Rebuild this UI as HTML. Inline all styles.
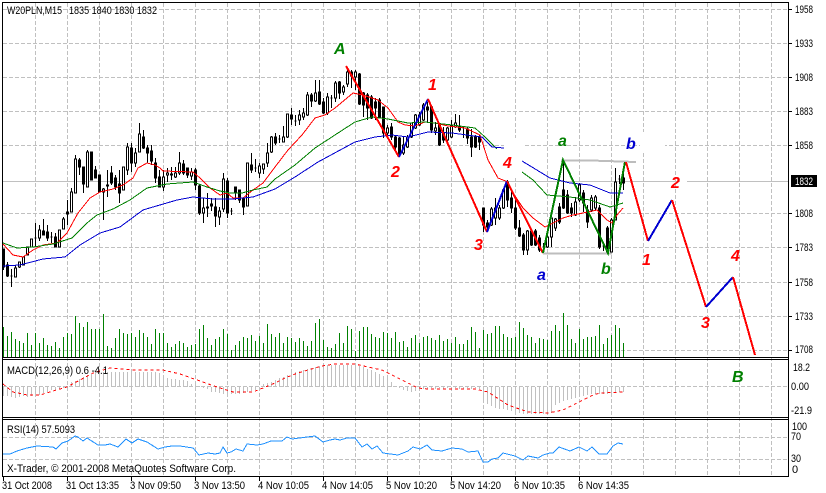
<!DOCTYPE html>
<html><head><meta charset="utf-8"><style>
html,body{margin:0;padding:0;background:#fff;width:826px;height:493px;overflow:hidden}
svg{display:block}
text{font-family:"Liberation Sans",sans-serif;font-size:11px;fill:#000}
.w{font-weight:bold;font-style:italic;font-size:16px}
</style></head><body>
<svg width="826" height="493" viewBox="0 0 826 493" xmlns="http://www.w3.org/2000/svg">
<rect width="826" height="493" fill="#fff"/>
<g shape-rendering="crispEdges" fill="none" stroke-width="1">
<path stroke="#c0c0c0" stroke-dasharray="4 2" d="M35.5 3V476M67.5 3V476M99.5 3V476M131.5 3V476M163.5 3V476M195.5 3V476M227.5 3V476M259.5 3V476M291.5 3V476M323.5 3V476M355.5 3V476M387.5 3V476M419.5 3V476M451.5 3V476M483.5 3V476M515.5 3V476M547.5 3V476M579.5 3V476M611.5 3V476M643.5 3V476M675.5 3V476M707.5 3V476M739.5 3V476M771.5 3V476"/>
<path stroke="#c0c0c0" stroke-dasharray="4 2" d="M3 9.5H788M3 43.5H788M3 77.5H788M3 111.5H788M3 145.5H788M3 213.5H788M3 247.5H788M3 282.5H788M3 316.5H788M3 350.5H788M3 386.5H788M3 437.5H788M3 459.5H788"/>
<rect x="640" y="132" width="25" height="20" fill="#fff" stroke="none"/>
<rect x="504" y="138" width="19" height="40" fill="#fff" stroke="none"/>
<rect x="481" y="148" width="22" height="30" fill="#fff" stroke="none"/>
<path stroke="#c0c0c0" d="M3 181.5H390M430 181.5H680M687 181.5H788"/>

<!-- volume -->
<path stroke="#008000" d="M3.5 357V327M7.5 357V336M11.5 357V332M15.5 357V339M19.5 357V341M23.5 357V343M27.5 357V333M31.5 357V345M35.5 357V333M39.5 357V343M43.5 357V338M47.5 357V345M51.5 357V346M55.5 357V342M59.5 357V348M63.5 357V337M67.5 357V333M71.5 357V334M75.5 357V316M79.5 357V323M83.5 357V327M87.5 357V322M91.5 357V329M95.5 357V329M99.5 357V329M103.5 357V314M107.5 357V346M111.5 357V348M115.5 357V338M119.5 357V329M123.5 357V333M127.5 357V334M131.5 357V333M135.5 357V337M139.5 357V330M143.5 357V333M147.5 357V337M151.5 357V344M155.5 357V329M159.5 357V333M163.5 357V333M167.5 357V343M171.5 357V347M175.5 357V344M179.5 357V341M183.5 357V343M187.5 357V347M191.5 357V345M195.5 357V344M199.5 357V329M203.5 357V325M207.5 357V338M211.5 357V345M215.5 357V339M219.5 357V337M223.5 357V329M227.5 357V334M231.5 357V350M235.5 357V345M239.5 357V341M243.5 357V337M247.5 357V338M251.5 357V335M255.5 357V341M259.5 357V336M263.5 357V343M267.5 357V324M271.5 357V334M275.5 357V337M279.5 357V333M283.5 357V343M287.5 357V337M291.5 357V338M295.5 357V342M299.5 357V338M303.5 357V341M307.5 357V346M311.5 357V341M315.5 357V323M319.5 357V319M323.5 357V340M327.5 357V347M331.5 357V348M335.5 357V344M339.5 357V333M343.5 357V343M347.5 357V326M351.5 357V329M355.5 357V351M359.5 357V331M363.5 357V327M367.5 357V327M371.5 357V334M375.5 357V337M379.5 357V338M383.5 357V332M387.5 357V333M391.5 357V338M395.5 357V332M399.5 357V342M403.5 357V341M407.5 357V347M411.5 357V338M415.5 357V335M419.5 357V343M423.5 357V337M427.5 357V336M431.5 357V338M435.5 357V340M439.5 357V335M443.5 357V341M447.5 357V339M451.5 357V343M455.5 357V337M459.5 357V344M463.5 357V344M467.5 357V340M471.5 357V327M475.5 357V332M479.5 357V348M483.5 357V330M487.5 357V334M491.5 357V333M495.5 357V326M499.5 357V326M503.5 357V334M507.5 357V337M511.5 357V338M515.5 357V337M519.5 357V322M523.5 357V328M527.5 357V335M531.5 357V337M535.5 357V343M539.5 357V338M543.5 357V339M547.5 357V340M551.5 357V331M555.5 357V325M559.5 357V331M563.5 357V313M567.5 357V325M571.5 357V339M575.5 357V343M579.5 357V329M583.5 357V339M587.5 357V337M591.5 357V337M595.5 357V336M599.5 357V325M603.5 357V344M607.5 357V338M611.5 357V335M615.5 357V325M619.5 357V328M623.5 357V343"/>

<!-- MACD histogram -->
<path stroke="#c0c0c0" d="M3.5 387V396M7.5 387V396M11.5 387V397M15.5 387V398M19.5 387V397M23.5 387V396M27.5 387V397M31.5 387V396M35.5 387V396M39.5 387V395M43.5 387V393M47.5 387V392M51.5 387V390M55.5 387V390M59.5 387V389M63.5 387V388M67.5 387V386M71.5 387V382M75.5 387V381M79.5 387V379M83.5 387V377M87.5 387V376M91.5 387V374M95.5 387V373M99.5 387V373M103.5 387V372M107.5 387V372M111.5 387V372M115.5 387V372M119.5 387V372M123.5 387V372M127.5 387V372M131.5 387V372M135.5 387V372M139.5 387V372M143.5 387V372M147.5 387V372M151.5 387V372M155.5 387V372M159.5 387V373M163.5 387V376M167.5 387V378M171.5 387V379M175.5 387V379M179.5 387V380M183.5 387V380M187.5 387V381M191.5 387V384M195.5 387V385M199.5 387V386M203.5 387V388M207.5 387V389M211.5 387V392M215.5 387V392M219.5 387V393M223.5 387V394M227.5 387V393M231.5 387V394M235.5 387V394M239.5 387V394M243.5 387V393M247.5 387V392M251.5 387V391M255.5 387V390M259.5 387V388M263.5 387V384M267.5 387V383M271.5 387V382M275.5 387V380M279.5 387V378M283.5 387V377M287.5 387V375M291.5 387V373M295.5 387V372M299.5 387V371M303.5 387V370M307.5 387V369M311.5 387V368M315.5 387V367M319.5 387V366M323.5 387V366M327.5 387V365M331.5 387V365M335.5 387V365M339.5 387V365M343.5 387V365M347.5 387V365M351.5 387V365M355.5 387V365M359.5 387V366M363.5 387V367M367.5 387V369M371.5 387V370M375.5 387V372M379.5 387V374M383.5 387V376M387.5 387V379M391.5 387V382M395.5 387V386M399.5 387V388M403.5 387V390M407.5 387V391M411.5 387V392M415.5 387V391M419.5 387V390M423.5 387V389M427.5 387V389M431.5 387V388M435.5 387V389M439.5 387V388M443.5 387V389M447.5 387V388M451.5 387V389M455.5 387V388M459.5 387V389M463.5 387V389M467.5 387V388M471.5 387V389M475.5 387V388M479.5 387V389M483.5 387V402M487.5 387V404M491.5 387V406M495.5 387V408M499.5 387V409M503.5 387V409M507.5 387V410M511.5 387V411M515.5 387V412M519.5 387V413M523.5 387V414M527.5 387V414M531.5 387V414M535.5 387V414M539.5 387V414M543.5 387V414M547.5 387V414M551.5 387V413M555.5 387V405M559.5 387V403M563.5 387V401M567.5 387V400M571.5 387V399M575.5 387V398M579.5 387V397M583.5 387V396M587.5 387V395M591.5 387V394M595.5 387V394M599.5 387V394M603.5 387V394M607.5 387V394M611.5 387V393M615.5 387V393M619.5 387V392M623.5 387V392"/>

<!-- wicks -->
<path stroke="#000" d="M3.5 249V270M7.5 262V277M11.5 269V287M15.5 265V277M19.5 262V268M23.5 257V265M27.5 247V255M31.5 239V247M35.5 223V247M39.5 225V241M43.5 219V235M47.5 225V241M51.5 232V243M55.5 233V247M59.5 230V247M63.5 217V229M67.5 200V225M71.5 188V212M75.5 155V193M79.5 158V175M83.5 167V193M87.5 150V187M91.5 152V180M95.5 166V178M99.5 175V192M103.5 188V220M107.5 170V197M111.5 166V185M115.5 175V190M119.5 170V203M123.5 167V190M127.5 143V175M131.5 143V172M135.5 148V167M139.5 123V152M143.5 130V149M147.5 145V163M151.5 145V165M155.5 158V183M159.5 170V187M163.5 170V191M167.5 168V182M171.5 167V180M175.5 167V178M179.5 152V175M183.5 160V175M187.5 168V178M191.5 168V180M195.5 168V190M199.5 185V215M203.5 198V223M207.5 193V217M211.5 198V211M215.5 198V227M219.5 207V225M223.5 173V212M227.5 178V218M231.5 208V215M235.5 187V200M239.5 190V203M243.5 197V215M247.5 163V206M251.5 153V173M255.5 159V172M259.5 163V178M263.5 164V174M267.5 143V167M271.5 136V153M275.5 133V145M279.5 135V143M283.5 126V142M287.5 114V138M291.5 108V125M295.5 115V126M299.5 110V125M303.5 108V120M307.5 92V116M311.5 93V107M315.5 80V102M319.5 80V105M323.5 98V114M327.5 93V115M331.5 95V108M335.5 81V102M339.5 81V99M343.5 85V95M347.5 68V87M351.5 70V88M355.5 70V90M359.5 73V105M363.5 92V117M367.5 93V120M371.5 95V119M375.5 98V120M379.5 98V118M383.5 107V138M387.5 125V135M391.5 123V140M395.5 135V152M399.5 137V157M403.5 137V155M407.5 135V148M411.5 123V138M415.5 114V129M419.5 112V126M423.5 103V121M427.5 102V123M431.5 105V133M435.5 122V135M439.5 124V146M443.5 127V143M447.5 127V142M451.5 120V138M455.5 114V128M459.5 115V132M463.5 127V138M467.5 127V144M471.5 129V157M475.5 135V148M479.5 135V150M483.5 208V232M487.5 220V232M491.5 207V226M495.5 198V225M499.5 205V220M503.5 188V209M507.5 180V207M511.5 190V213M515.5 198V230M519.5 220V237M523.5 233V255M527.5 230V255M531.5 229V246M535.5 229V246M539.5 235V252M543.5 243V254M547.5 232V248M551.5 218V247M555.5 218V231M559.5 203V224M563.5 162V209M567.5 190V214M571.5 203V217M575.5 197V216M579.5 183V202M583.5 190V212M587.5 205V228M591.5 195V212M595.5 195V210M599.5 205V249M603.5 243V251M607.5 226V254M611.5 218V253M615.5 168V220M619.5 175V184M623.5 174V190"/>
<!-- black bodies -->
<path stroke="#000" fill="#000" d="M2.5 249h2v18h-2zM6.5 265h2v11h-2zM10.5 276h2v0h-2zM34.5 238h2v0h-2zM42.5 231h2v4h-2zM46.5 232h2v6h-2zM50.5 237h2v0h-2zM54.5 237h2v10h-2zM66.5 212h2v2h-2zM78.5 160h2v7h-2zM82.5 167h2v17h-2zM90.5 152h2v28h-2zM94.5 170h2v8h-2zM98.5 175h2v17h-2zM106.5 185h2v1h-2zM110.5 173h2v10h-2zM114.5 178h2v9h-2zM118.5 184h2v9h-2zM130.5 148h2v15h-2zM142.5 137h2v11h-2zM146.5 148h2v5h-2zM150.5 151h2v10h-2zM154.5 163h2v15h-2zM158.5 177h2v10h-2zM170.5 174h2v1h-2zM182.5 164h2v9h-2zM186.5 168h2v7h-2zM194.5 170h2v15h-2zM198.5 186h2v27h-2zM206.5 207h2v1h-2zM210.5 204h2v2h-2zM214.5 207h2v9h-2zM226.5 181h2v32h-2zM230.5 211h2v0h-2zM234.5 187h2v6h-2zM238.5 190h2v10h-2zM242.5 198h2v9h-2zM250.5 165h2v5h-2zM254.5 168h2v0h-2zM274.5 137h2v6h-2zM278.5 139h2v0h-2zM290.5 115h2v4h-2zM294.5 121h2v0h-2zM310.5 95h2v6h-2zM318.5 92h2v12h-2zM322.5 102h2v11h-2zM330.5 98h2v0h-2zM338.5 82h2v11h-2zM350.5 72h2v4h-2zM358.5 74h2v30h-2zM362.5 93h2v12h-2zM366.5 95h2v13h-2zM370.5 97h2v21h-2zM374.5 102h2v6h-2zM378.5 100h2v17h-2zM382.5 107h2v26h-2zM390.5 127h2v10h-2zM394.5 137h2v10h-2zM398.5 138h2v17h-2zM426.5 107h2v3h-2zM430.5 107h2v23h-2zM438.5 125h2v20h-2zM442.5 133h2v7h-2zM458.5 126h2v4h-2zM462.5 128h2v0h-2zM466.5 129h2v9h-2zM470.5 137h2v10h-2zM474.5 137h2v10h-2zM478.5 137h2v5h-2zM482.5 208h2v17h-2zM486.5 223h2v4h-2zM506.5 182h2v18h-2zM510.5 198h2v10h-2zM514.5 208h2v20h-2zM518.5 228h2v8h-2zM522.5 235h2v15h-2zM530.5 231h2v14h-2zM534.5 231h2v14h-2zM538.5 238h2v12h-2zM542.5 247h2v0h-2zM558.5 207h2v15h-2zM562.5 190h2v18h-2zM566.5 195h2v18h-2zM570.5 208h2v5h-2zM582.5 193h2v10h-2zM586.5 210h2v12h-2zM598.5 208h2v39h-2zM602.5 246h2v0h-2zM606.5 228h2v24h-2zM618.5 179h2v0h-2zM622.5 178h2v5h-2z"/>
<!-- white bodies -->
<path stroke="#000" fill="#fff" d="M14.5 268h2v9h-2zM18.5 262h2v5h-2zM22.5 257h2v8h-2zM26.5 247h2v8h-2zM30.5 239h2v8h-2zM38.5 230h2v8h-2zM58.5 230h2v17h-2zM62.5 219h2v10h-2zM70.5 192h2v20h-2zM74.5 159h2v34h-2zM86.5 152h2v35h-2zM102.5 189h2v3h-2zM122.5 167h2v23h-2zM126.5 147h2v23h-2zM134.5 153h2v10h-2zM138.5 134h2v18h-2zM162.5 177h2v10h-2zM166.5 173h2v2h-2zM174.5 173h2v4h-2zM178.5 163h2v10h-2zM190.5 172h2v4h-2zM202.5 208h2v5h-2zM218.5 211h2v6h-2zM222.5 179h2v30h-2zM246.5 163h2v43h-2zM258.5 166h2v7h-2zM262.5 164h2v5h-2zM266.5 153h2v10h-2zM270.5 137h2v15h-2zM282.5 137h2v5h-2zM286.5 114h2v23h-2zM298.5 115h2v5h-2zM302.5 113h2v4h-2zM306.5 95h2v20h-2zM314.5 93h2v8h-2zM326.5 97h2v16h-2zM334.5 83h2v15h-2zM342.5 87h2v5h-2zM346.5 72h2v12h-2zM354.5 72h2v5h-2zM386.5 128h2v5h-2zM402.5 145h2v8h-2zM406.5 137h2v10h-2zM410.5 123h2v14h-2zM414.5 115h2v13h-2zM418.5 115h2v10h-2zM422.5 105h2v15h-2zM434.5 128h2v3h-2zM446.5 128h2v12h-2zM450.5 126h2v11h-2zM454.5 123h2v4h-2zM490.5 209h2v16h-2zM494.5 208h2v10h-2zM498.5 208h2v10h-2zM502.5 190h2v18h-2zM526.5 231h2v19h-2zM546.5 237h2v10h-2zM550.5 218h2v19h-2zM554.5 219h2v9h-2zM574.5 202h2v13h-2zM578.5 185h2v15h-2zM590.5 198h2v12h-2zM594.5 197h2v11h-2zM610.5 220h2v32h-2zM614.5 182h2v38h-2z"/>

<!-- frames -->
<path stroke="#000" d="M2.5 2V476M2 2.5H789M788.5 2V476M2 357.5H789M2 359.5H789M2 417.5H789M2 419.5H789M2 476.5H789"/>
<path stroke="#000" d="M3.5 477V481M67.5 477V481M131.5 477V481M195.5 477V481M259.5 477V481M323.5 477V481M387.5 477V481M451.5 477V481M515.5 477V481M579.5 477V481M789 9.5H792M789 43.5H792M789 77.5H792M789 111.5H792M789 145.5H792M789 213.5H792M789 247.5H792M789 282.5H792M789 316.5H792M789 350.5H792"/>
</g>

<!-- MAs -->
<g fill="none" stroke-width="1" shape-rendering="crispEdges">
<polyline stroke="#f00" points="3,244 13,255 23,257 33,250 43,245 57,243 67,233 78,213 90,198 100,192 113,189 123,185 133,178 138,168 147,163 155,165 160,168 163,171 193,172 200,178 210,188 220,195 227,193 233,198 243,198 253,190 263,183 275,167 288,150 302,135 315,118 325,115 335,108 353,93 363,95 378,100 388,108 398,122 405,125 415,126 425,122 435,123 448,126 465,128 480,135 488,160 498,178 508,182 513,193 523,208 533,218 545,227 553,223 563,218 573,215 583,213 597,210 607,220 612,223 617,215 623,208"/>
<polyline stroke="#008000" points="3,243 17,248 33,247 53,244 72,238 87,223 97,215 113,209 130,200 147,188 167,184 193,182 207,187 220,191 230,193 242,193 253,190 267,187 275,179 295,165 315,148 338,133 355,122 372,117 388,119 408,123 425,122 452,125 475,128 485,137 497,149"/>
<polyline stroke="#008000" points="522,172 533,180 547,195 570,197 590,200 610,207 623,203"/>
<polyline stroke="#0000d0" points="3,266 20,265 43,259 65,257 80,245 100,233 120,227 143,210 153,207 177,200 193,197 213,199 233,199 253,197 275,189 295,177 318,162 355,142 375,137 392,135 408,137 428,132 452,133 482,137 492,147 504,148"/>
<polyline stroke="#0000d0" points="522,161 550,178 570,183 590,185 610,193 623,193"/>
<!-- MACD signal -->
<polyline stroke="#f00" stroke-dasharray="3 3" points="3,384 13,392 27,395 40,395 53,391 67,387 80,380 93,373 110,368 133,370 163,370 180,374 200,381 217,387 233,392 253,392 263,388 275,383 285,378 295,374 308,370 322,366 335,364 355,364 368,367 382,370 392,375 408,383 418,388 428,389 475,389 488,392 508,405 528,412 548,413 563,410 577,403 593,395 600,393 623,392"/>
<!-- RSI -->
<polyline stroke="#1e90ff" points="3,454 10,454 17,451 27,448 37,446 53,447 56,449 62,443 68,441 75,436 78,437 83,441 87,438 98,445 105,445 110,444 118,447 126,439 132,443 138,439 147,442 158,449 165,447 172,446 180,446 193,448 199,455 208,453 215,454 220,453 223,447 227,453 231,452 236,449 243,451 247,444 257,445 263,444 271,441 275,441 282,441 287,437 292,439 307,437 315,436 323,442 330,440 335,439 340,440 347,438 355,438 362,447 367,444 372,449 377,446 383,453 398,455 408,451 413,447 420,449 427,445 432,450 442,451 452,448 462,449 468,452 478,451 483,462 488,462 492,459 498,458 503,453 515,456 523,460 528,456 538,458 543,455 550,453 553,453 559,447 570,451 579,447 587,451 592,447 599,454 607,454 613,446 618,443 623,444"/>
</g>

<!-- wave lines -->
<g fill="none" stroke-width="2" shape-rendering="crispEdges">
<path stroke="#bdbdbd" d="M543 253.5H612M561 160.5H591L636 162"/>
<path stroke="#f00" d="M346 66L399 157"/>
<path stroke="#0000d0" d="M399 157L428 99"/>
<path stroke="#f00" d="M428 99L487 232"/>
<path stroke="#0000d0" d="M487 232L507 181"/>
<path stroke="#f00" d="M507 181L543 253"/>
<path stroke="#008000" d="M543 253L563 160L608 253L625 162"/>
<path stroke="#f00" d="M626 162L648 241"/>
<path stroke="#0000d0" d="M648 241L672 200"/>
<path stroke="#f00" d="M672 200L706 307"/>
<path stroke="#0000d0" d="M706 307L733 277"/>
<path stroke="#f00" d="M733 277L755 355"/>
</g>

<!-- wave labels -->
<text class="w" x="334" y="54" style="fill:#008000">A</text>
<text class="w" x="428" y="90" style="fill:#f00">1</text>
<text class="w" x="391" y="177" style="fill:#f00">2</text>
<text class="w" x="474" y="250" style="fill:#f00">3</text>
<text class="w" x="503" y="168" style="fill:#f00">4</text>
<text class="w" x="558" y="146" style="fill:#008000">a</text>
<text class="w" x="626" y="149" style="fill:#0000d0">b</text>
<text class="w" x="537" y="280" style="fill:#0000d0">a</text>
<text class="w" x="601" y="274" style="fill:#008000">b</text>
<text class="w" x="642" y="265" style="fill:#f00">1</text>
<text class="w" x="671" y="188" style="fill:#f00">2</text>
<text class="w" x="701" y="328" style="fill:#f00">3</text>
<text class="w" x="731" y="261" style="fill:#f00">4</text>
<text class="w" x="732" y="382" style="fill:#008000">B</text>

<!-- panel text -->
<text x="7" y="14" textLength="55" lengthAdjust="spacingAndGlyphs">W20PLN,M15</text>
<text x="69" y="14" textLength="88" lengthAdjust="spacingAndGlyphs">1835 1840 1830 1832</text>
<text x="7" y="374" textLength="101" lengthAdjust="spacingAndGlyphs">MACD(12,26,9) 0.6 -4.1</text>
<text x="7" y="433" textLength="68" lengthAdjust="spacingAndGlyphs">RSI(14) 57.5093</text>
<text x="7" y="472" textLength="229" lengthAdjust="spacingAndGlyphs">X-Trader, © 2001-2008 MetaQuotes Software Corp.</text>

<!-- price axis -->
<text x="795" y="13" textLength="18" lengthAdjust="spacingAndGlyphs">1958</text>
<text x="795" y="47" textLength="18" lengthAdjust="spacingAndGlyphs">1933</text>
<text x="795" y="81" textLength="18" lengthAdjust="spacingAndGlyphs">1908</text>
<text x="795" y="115" textLength="18" lengthAdjust="spacingAndGlyphs">1883</text>
<text x="795" y="149" textLength="18" lengthAdjust="spacingAndGlyphs">1858</text>
<text x="795" y="217" textLength="18" lengthAdjust="spacingAndGlyphs">1808</text>
<text x="795" y="251" textLength="18" lengthAdjust="spacingAndGlyphs">1783</text>
<text x="795" y="286" textLength="18" lengthAdjust="spacingAndGlyphs">1758</text>
<text x="795" y="320" textLength="18" lengthAdjust="spacingAndGlyphs">1733</text>
<text x="795" y="353" textLength="18" lengthAdjust="spacingAndGlyphs">1708</text>
<rect x="791" y="175" width="26" height="12" fill="#000"/>
<text x="795" y="185" textLength="18" lengthAdjust="spacingAndGlyphs" style="fill:#fff">1832</text>
<text x="793" y="371" textLength="17" lengthAdjust="spacingAndGlyphs">18.2</text>
<text x="791" y="390" textLength="18" lengthAdjust="spacingAndGlyphs">0.00</text>
<text x="791" y="414" textLength="21" lengthAdjust="spacingAndGlyphs">-21.9</text>
<text x="792" y="430" textLength="15" lengthAdjust="spacingAndGlyphs">100</text>
<text x="791" y="440" textLength="10" lengthAdjust="spacingAndGlyphs">70</text>
<text x="791" y="462" textLength="10" lengthAdjust="spacingAndGlyphs">30</text>
<text x="792" y="473">0</text>

<!-- time axis -->
<text x="2" y="489" textLength="50" lengthAdjust="spacingAndGlyphs">31 Oct 2008</text>
<text x="66" y="489" textLength="53" lengthAdjust="spacingAndGlyphs">31 Oct 13:35</text>
<text x="130" y="489" textLength="51" lengthAdjust="spacingAndGlyphs">3 Nov 09:50</text>
<text x="194" y="489" textLength="51" lengthAdjust="spacingAndGlyphs">3 Nov 13:50</text>
<text x="258" y="489" textLength="51" lengthAdjust="spacingAndGlyphs">4 Nov 10:05</text>
<text x="322" y="489" textLength="51" lengthAdjust="spacingAndGlyphs">4 Nov 14:05</text>
<text x="386" y="489" textLength="51" lengthAdjust="spacingAndGlyphs">5 Nov 10:20</text>
<text x="450" y="489" textLength="51" lengthAdjust="spacingAndGlyphs">5 Nov 14:20</text>
<text x="514" y="489" textLength="51" lengthAdjust="spacingAndGlyphs">6 Nov 10:35</text>
<text x="578" y="489" textLength="51" lengthAdjust="spacingAndGlyphs">6 Nov 14:35</text>
</svg>
</body></html>
